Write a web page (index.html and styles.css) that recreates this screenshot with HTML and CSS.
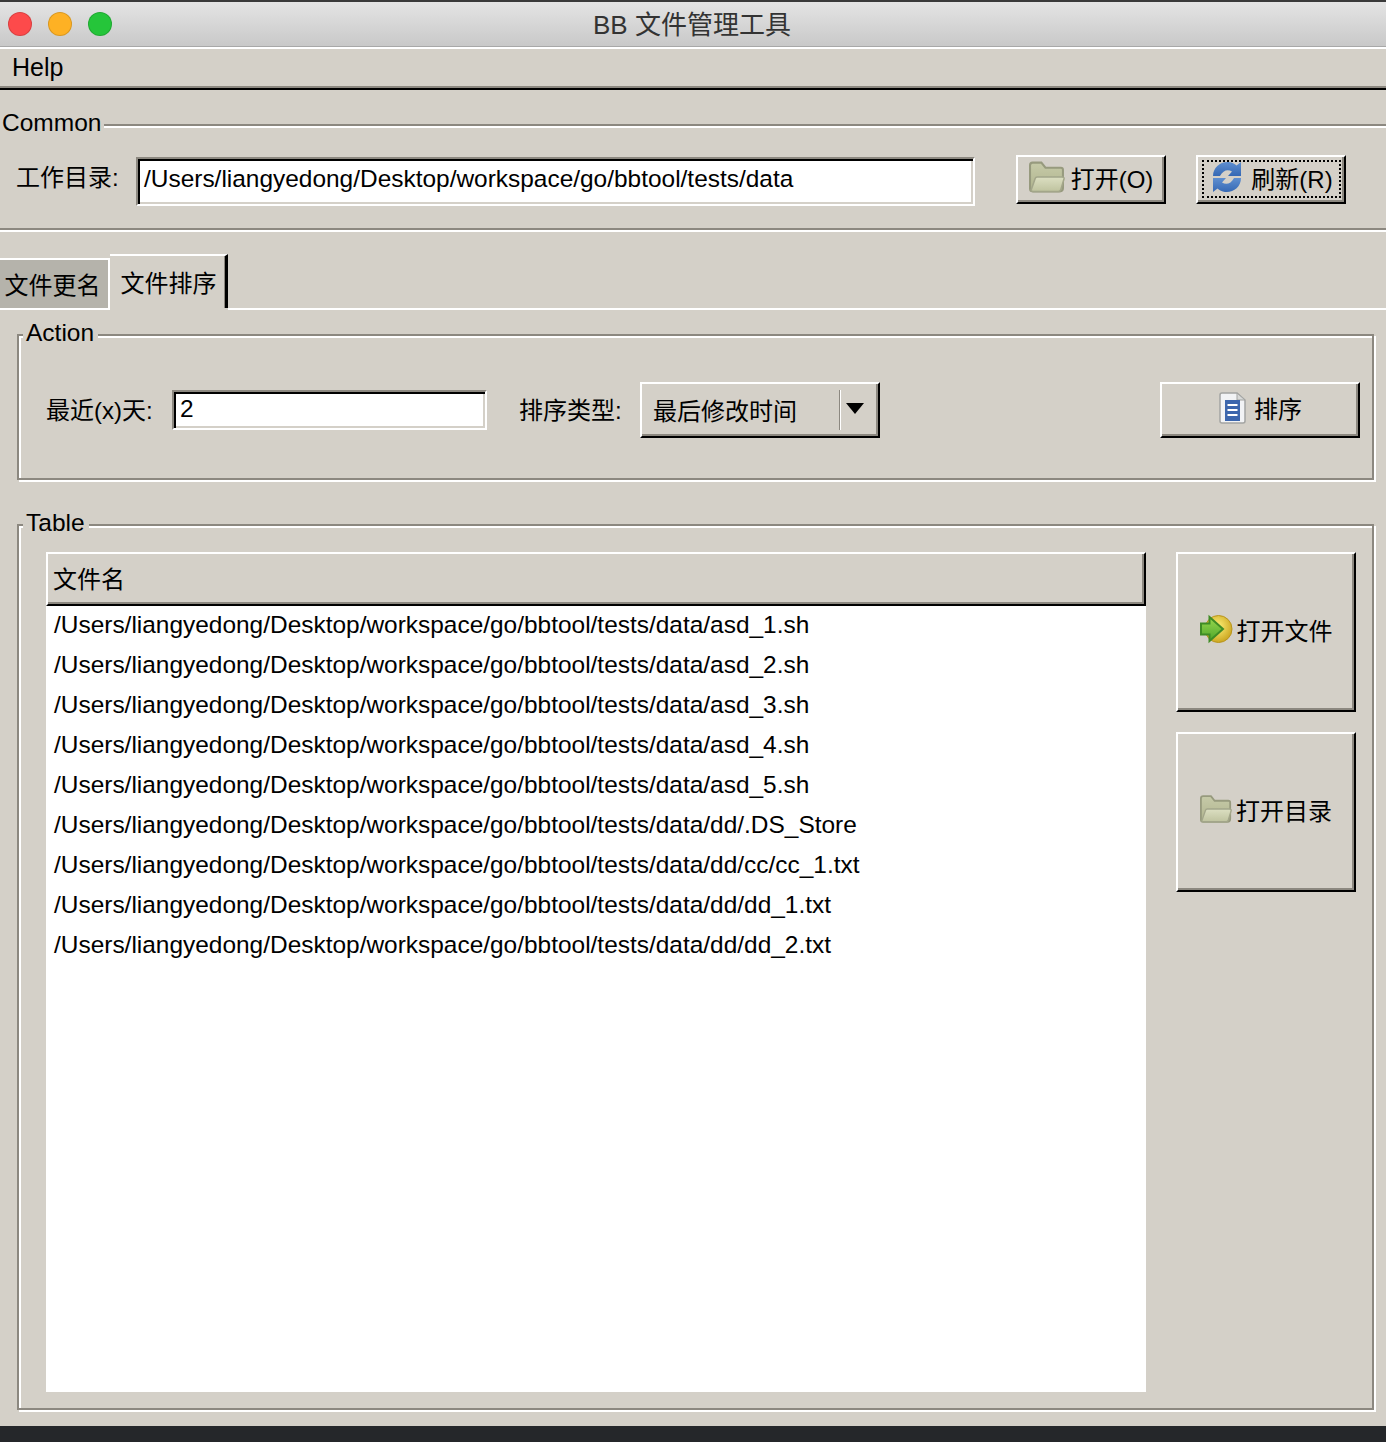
FILE: index.html
```html
<!DOCTYPE html>
<html lang="zh">
<head>
<meta charset="utf-8">
<title>BB 文件管理工具</title>
<link rel="stylesheet" href="styles.css">
</head>
<body>
<svg class="defs" width="0" height="0" aria-hidden="true">
  <defs>
    <linearGradient id="fback" x1="0" y1="0" x2="0" y2="1"><stop offset="0" stop-color="#c6caa8"/><stop offset="1" stop-color="#b0b48e"/></linearGradient>
    <linearGradient id="ffront" x1="0" y1="0" x2="0" y2="1"><stop offset="0" stop-color="#dcdfc2"/><stop offset="1" stop-color="#bfc39f"/></linearGradient>
    <linearGradient id="blue1" x1="0" y1="0" x2="0" y2="1"><stop offset="0" stop-color="#5f8fd0"/><stop offset="1" stop-color="#3568b4"/></linearGradient>
    <linearGradient id="green1" x1="0" y1="0" x2="0" y2="1"><stop offset="0" stop-color="#9ad94f"/><stop offset="1" stop-color="#4da52a"/></linearGradient>
    <radialGradient id="gold1" cx="0.45" cy="0.4" r="0.7"><stop offset="0" stop-color="#fff27a"/><stop offset="1" stop-color="#c39a12"/></radialGradient>
    <symbol id="folder" viewBox="1 1 35 30">
      <path d="M2 4.500Q2 2 4.500 2H13L17 7H32Q34 7 34 9V27Q34 30 31 30H4.500Q2 30 2 27.500Z" fill="url(#fback)" stroke="#979a7e" stroke-width="2"/>
      <path d="M3 29L7 17.500Q7.500 16 9 16H33Q35.500 16 35 18L32 28Q31.500 30 29.500 30H5Q3 30 3 29Z" fill="url(#ffront)" stroke="#a3a68a" stroke-width="1.500"/>
    </symbol>
  </defs>
</svg>

<div class="window">
  <header class="titlebar">
    <div class="lights">
      <span class="light light-red"></span>
      <span class="light light-yellow"></span>
      <span class="light light-green"></span>
    </div>
    <div class="title">BB 文件管理工具</div>
  </header>

  <nav class="menubar"><span class="menu-item">Help</span></nav>

  <section class="group group-common">
    <div class="legend legend-common">Common</div>
    <div class="common-row">
      <label class="label label-workdir">工作目录:</label>
      <div class="entry entry-workdir">/Users/liangyedong/Desktop/workspace/go/bbtool/tests/data</div>
      <button class="btn btn-open" type="button">
        <svg class="icon icon-folder-lg"><use href="#folder"/></svg><span>打开(O)</span>
      </button>
      <button class="btn btn-refresh" type="button">
        <svg class="icon icon-refresh" viewBox="0 0 32 32">
          <path d="M2 15C2 6 10 0 18 1 21 1.500 23.500 2.500 25.500 4.500L30 1V15H17L21 10.500C17 8 12 9 9 15Z" fill="url(#blue1)"/>
          <path d="M30 17C30 26 22 32 14 31 11 30.500 8.500 29.500 6.500 27.500L2 31V17H15L11 21.500C15 24 20 23 23 17Z" fill="url(#blue1)"/>
        </svg><span>刷新(R)</span>
      </button>
    </div>
  </section>

  <div class="tabs">
    <div class="tab tab-inactive">文件更名</div>
    <div class="tab tab-active">文件排序</div>
    <div class="tab-fill"></div>
  </div>

  <section class="group group-action">
    <div class="legend">Action</div>
    <div class="action-row">
      <label class="label label-days">最近(x)天:</label>
      <div class="entry entry-days">2</div>
      <label class="label label-type">排序类型:</label>
      <div class="combo">
        <span class="combo-text">最后修改时间</span>
        <span class="combo-sep"></span>
        <span class="combo-arrow"></span>
      </div>
      <button class="btn btn-sort" type="button">
        <svg class="icon icon-doc" viewBox="0 0 28 32">
          <path d="M2 3Q2 1 4 1H19L27 8V29Q27 31 25 31H4Q2 31 2 29Z" fill="#f2f3f5" stroke="#a3a4a2" stroke-width="1.500"/>
          <path d="M19 1V8H27Z" fill="#d8d9d8" stroke="#a3a4a2"/>
          <rect x="7" y="8" width="15" height="21" fill="#3c66ad"/>
          <path d="M9.500 13H19.500M9.500 18H19.500M9.500 23H19.500" stroke="#fff" stroke-width="2"/>
        </svg><span>排序</span>
      </button>
    </div>
  </section>

  <section class="group group-table">
    <div class="legend">Table</div>
    <div class="table-body">
      <div class="list">
        <div class="list-head">文件名</div>
        <ul class="rows">
          <li>/Users/liangyedong/Desktop/workspace/go/bbtool/tests/data/asd_1.sh</li>
          <li>/Users/liangyedong/Desktop/workspace/go/bbtool/tests/data/asd_2.sh</li>
          <li>/Users/liangyedong/Desktop/workspace/go/bbtool/tests/data/asd_3.sh</li>
          <li>/Users/liangyedong/Desktop/workspace/go/bbtool/tests/data/asd_4.sh</li>
          <li>/Users/liangyedong/Desktop/workspace/go/bbtool/tests/data/asd_5.sh</li>
          <li>/Users/liangyedong/Desktop/workspace/go/bbtool/tests/data/dd/.DS_Store</li>
          <li>/Users/liangyedong/Desktop/workspace/go/bbtool/tests/data/dd/cc/cc_1.txt</li>
          <li>/Users/liangyedong/Desktop/workspace/go/bbtool/tests/data/dd/dd_1.txt</li>
          <li>/Users/liangyedong/Desktop/workspace/go/bbtool/tests/data/dd/dd_2.txt</li>
        </ul>
      </div>
      <div class="side">
        <button class="btn btn-side" type="button">
          <svg class="icon icon-go" viewBox="0 0 33 30">
            <circle cx="18.500" cy="15" r="13.500" fill="url(#gold1)" stroke="#b8941c"/>
            <path d="M1 9.500H9.500V3L23 15 9.500 27V20.500H1Z" fill="url(#green1)" stroke="#3f8c25" stroke-width="2"/>
          </svg><span>打开文件</span>
        </button>
        <button class="btn btn-side" type="button">
          <svg class="icon icon-folder-sm"><use href="#folder"/></svg><span>打开目录</span>
        </button>
      </div>
    </div>
  </section>

  <div class="backdrop"></div>
</div>
</body>
</html>
```

FILE: styles.css
```css
* { box-sizing: border-box; }

html, body {
  margin: 0;
  height: 1442px;
  overflow: hidden;
}

body {
  background: #d4d0c8;
  color: #000;
  font-family: "Liberation Sans", "Noto Sans CJK SC", sans-serif;
  font-size: 24px;
}

.defs { position: absolute; }

.window {
  height: 1442px;
  display: flex;
  flex-direction: column;
  overflow: hidden;
}

/* title bar */
.titlebar {
  height: 49px;
  flex: none;
  display: flex;
  align-items: center;
  position: relative;
  background: linear-gradient(#e4e4e4, #c8c8c8);
  border-top: 2px solid #3a3a3a;
  border-bottom: 2px solid #fff;
  box-shadow: inset 0 -1px 0 #a8a8a8;
}

.lights {
  display: flex;
  gap: 16px;
  padding-left: 8px;
  margin-top: -1px;
}

.light {
  width: 24px;
  height: 24px;
  border-radius: 50%;
  border: 1px solid rgba(0, 0, 0, .14);
}
.light-red { background: #fd4a4b; }
.light-yellow { background: #feb124; }
.light-green { background: #25c53a; }

.title {
  position: absolute;
  left: 0;
  right: 2px;
  top: 3px;
  text-align: center;
  font-size: 26px;
  line-height: 40px;
  color: #333;
}

/* menu */
.menubar {
  height: 41px;
  flex: none;
  padding-left: 12px;
  font-size: 25px;
  line-height: 36px;
  border-bottom: 2px solid #000;
  box-shadow: inset 0 -2px 0 #8c8880;
}

/* etched group */
.group {
  flex: none;
  border: 2px solid #8c8880;
  box-shadow: inset 2px 2px 0 #fff, 2px 2px 0 #fff;
}

.legend {
  width: fit-content;
  margin: -18px 0 0 4px;
  padding: 0 4px 0 3px;
  height: 30px;
  font-size: 24.5px;
  line-height: 30px;
  background: #d4d0c8;
}

.group-common {
  margin: 34px -4px 0;
  height: 106px;
}

.legend-common {
  margin: -18px 0 0 2px;
  padding: 0 3px 0 2px;
}

.common-row {
  display: flex;
  align-items: flex-start;
  margin-top: 17px;
  padding-left: 18px;
}

.label {
  flex: none;
  white-space: nowrap;
}

.label-workdir {
  line-height: 46px;
  width: 120px;
}

/* sunken entry */
.entry {
  flex: none;
  background: #fff;
  border: 2px solid;
  border-color: #8c8880 #fff #fff #8c8880;
  box-shadow: inset 2px 2px 0 #000, inset -2px -2px 0 #d4d0c8;
  font-size: 24.45px;
  white-space: nowrap;
}

.entry-workdir {
  width: 839px;
  height: 49px;
  margin-top: 2px;
  padding-left: 6px;
  line-height: 40px;
}

.entry-days {
  width: 315px;
  height: 40px;
  padding-left: 6px;
  line-height: 34px;
}

/* raised button */
.btn {
  flex: none;
  display: flex;
  align-items: center;
  justify-content: center;
  margin: 0;
  padding: 0 0 5px;
  font: inherit;
  color: #000;
  background: #d4d0c8;
  border: 2px solid;
  border-color: #fff #000 #000 #fff;
  box-shadow: inset -2px -2px 0 #8c8880;
  position: relative;
}

.btn span { white-space: nowrap; }

.btn-open {
  width: 150px;
  height: 49px;
  margin-left: 41px;
  gap: 6px;
}

.btn-refresh {
  width: 150px;
  height: 49px;
  margin-left: 30px;
  padding-left: 2px;
  gap: 8px;
}

.btn-refresh::after {
  content: "";
  position: absolute;
  inset: 3px 3px 4px 4px;
  border: 2px dotted #000;
}

.icon { flex: none; display: block; filter: blur(.4px); }
.icon-folder-lg { width: 36px; height: 32px; }
.icon-folder-sm { width: 32px; height: 28px; }
.icon-refresh { width: 32px; height: 32px; }
.icon-doc { width: 28px; height: 32px; }
.icon-go { width: 33px; height: 30px; }

/* tabs */
.tabs {
  display: flex;
  flex: none;
  height: 56px;
  margin-top: 24px;
}

.tab {
  flex: none;
  text-align: center;
}

.tab-inactive {
  width: 110px;
  height: 52px;
  margin-top: 4px;
  padding-right: 3px;
  line-height: 52px;
  background: #b5b3ab;
  border: solid #fff;
  border-width: 2px 2px 2px 0;
}

.tab-active {
  width: 118px;
  height: 54px;
  padding-left: 2px;
  line-height: 56px;
  border-top: 2px solid #fff;
  border-right: 3px solid #000;
  box-shadow: inset -1px 0 0 #8c8880;
}

.tab-fill {
  flex: 1;
  border-bottom: 2px solid #fff;
}

/* action */
.group-action {
  margin: 24px 12px 0 17px;
  height: 146px;
}

.action-row {
  display: flex;
  align-items: center;
  height: 56px;
  margin-top: 34px;
  padding: 0 12px 0 27px;
}

.label-days { width: 126px; margin-bottom: 4px; }
.label-type { width: 121px; margin: 0 0 4px 32px; }

.combo {
  flex: none;
  width: 240px;
  height: 56px;
  display: flex;
  align-items: center;
  border: 2px solid;
  border-color: #fff #000 #000 #fff;
  box-shadow: inset -2px -2px 0 #8c8880;
}

.combo-text {
  width: 185px;
  padding: 0 0 2px 11px;
  white-space: nowrap;
}

.combo-sep {
  width: 2px;
  height: 40px;
  margin-left: 12px;
  background: linear-gradient(90deg, #8c8880 50%, #fff 50%);
}

.combo-arrow {
  width: 0;
  height: 0;
  margin: -4px 0 0 5px;
  border-style: solid;
  border-width: 11px 9px 0;
  border-color: #000 transparent transparent;
}

.btn-sort {
  width: 200px;
  height: 56px;
  margin-left: auto;
  gap: 8px;
}

/* table */
.group-table {
  margin: 44px 12px 0 17px;
  height: 886px;
}

.table-body {
  display: flex;
  align-items: flex-start;
  margin-top: 14px;
  padding-left: 27px;
}

.list {
  flex: none;
  width: 1100px;
  height: 840px;
  background: #fff;
}

.list-head {
  height: 54px;
  padding-left: 5px;
  line-height: 52px;
  background: #d4d0c8;
  border: 2px solid;
  border-color: #fff #000 #000 #fff;
  box-shadow: inset -2px -2px 0 #8c8880;
}

.rows {
  list-style: none;
  margin: 0;
  padding: 0 0 0 8px;
  font-size: 24.45px;
}

.rows li {
  height: 40px;
  line-height: 38px;
  white-space: nowrap;
}

.side {
  flex: none;
  display: flex;
  flex-direction: column;
  gap: 20px;
  width: 180px;
  margin-left: 30px;
}

.btn-side {
  width: 180px;
  height: 160px;
  gap: 4px;
  padding-bottom: 6px;
}

.backdrop {
  flex: 1;
  margin-top: 16px;
  background: #25272a;
}
```
